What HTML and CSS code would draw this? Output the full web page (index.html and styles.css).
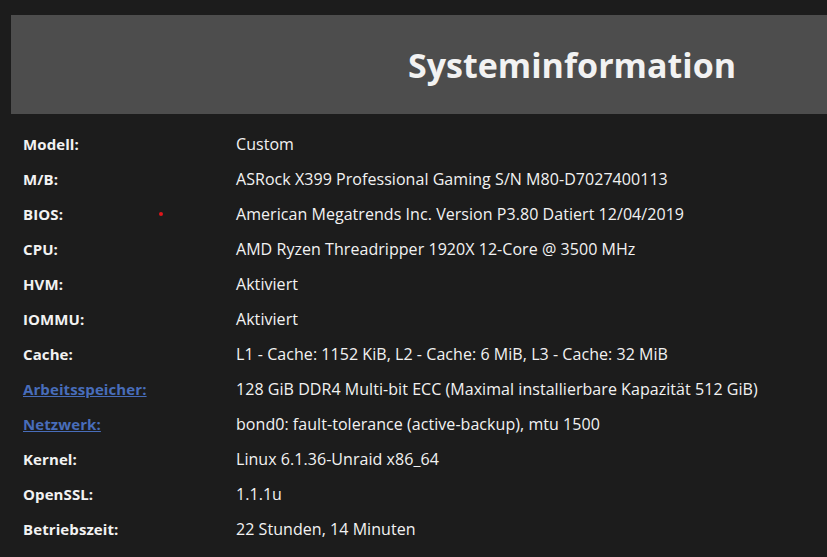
FILE: index.html
```html
<!DOCTYPE html>
<html lang="de">
<head>
  <meta charset="UTF-8">
  <title>Systeminformation</title>
  <link rel="stylesheet" href="styles.css">
</head>
<body>
  <div class="title-bar">
    <h1>Systeminformation</h1>
  </div>

  <table class="info">
    <tr><td class="label">Modell:</td><td>Custom</td></tr>
    <tr><td class="label">M/B:</td><td>ASRock X399 Professional Gaming S/N M80-D7027400113</td></tr>
    <tr><td class="label">BIOS:<span class="dot"></span></td><td>American Megatrends Inc. Version P3.80 Datiert 12/04/2019</td></tr>
    <tr><td class="label">CPU:</td><td>AMD Ryzen Threadripper 1920X 12-Core @ 3500 MHz</td></tr>
    <tr><td class="label">HVM:</td><td>Aktiviert</td></tr>
    <tr><td class="label">IOMMU:</td><td>Aktiviert</td></tr>
    <tr><td class="label">Cache:</td><td>L1 - Cache: 1152 KiB, L2 - Cache: 6 MiB, L3 - Cache: 32 MiB</td></tr>
    <tr><td class="label"><a href="#">Arbeitsspeicher:</a></td><td>128 GiB DDR4 Multi-bit ECC (Maximal installierbare Kapazität 512 GiB)</td></tr>
    <tr><td class="label"><a href="#">Netzwerk:</a></td><td>bond0: fault-tolerance (active-backup), mtu 1500</td></tr>
    <tr><td class="label">Kernel:</td><td>Linux 6.1.36-Unraid x86_64</td></tr>
    <tr><td class="label">OpenSSL:</td><td>1.1.1u</td></tr>
    <tr><td class="label">Betriebszeit:</td><td>22 Stunden, 14 Minuten</td></tr>
  </table>
</body>
</html>
```

FILE: styles.css
```css
/* dark system info panel */
body {
  margin: 0;
  background-color: #1c1c1c;
  color: #f2f2f2;
  font-family: "Open Sans", "Noto Sans", sans-serif;
  font-size: 16px;
  letter-spacing: 0.05px;
  overflow: hidden;
}
.title-bar {
  margin: 15px 0 0 11px;
  height: 99px;
  background-color: #4d4d4d;
}
.title-bar h1 {
  margin: 0;
  padding-left: 397px;
  line-height: 101px;
  font-size: 34px;
  font-weight: bold;
  letter-spacing: 0;
  color: #f2f2f2;
  white-space: nowrap;
}
.info {
  margin: 12px 0 0 23px;
  border-collapse: collapse;
}
.info td {
  padding: 0;
  height: 35px;
  vertical-align: middle;
  white-space: nowrap;
}
.info .label {
  width: 213px;
  font-size: 15px;
  letter-spacing: 0.1px;
  font-weight: bold;
  position: relative;
}
.info a {
  color: #486dba;
}
/* small red marker beside BIOS */
.dot {
  position: absolute;
  left: 136px;
  top: 16px;
  width: 4px;
  height: 4px;
  border-radius: 50%;
  background-color: #e0161b;
}
```
